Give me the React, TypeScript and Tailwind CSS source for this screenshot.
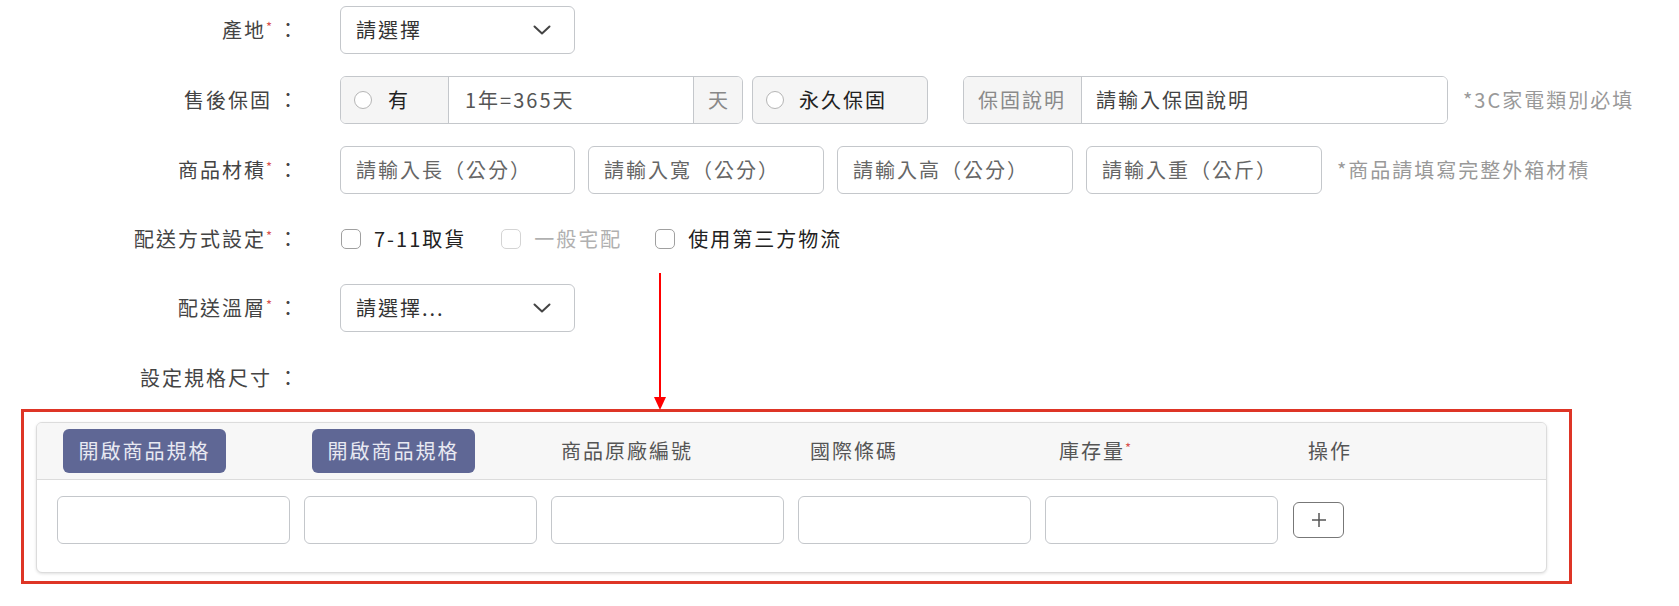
import React from 'react';

const FONT = "font-['Noto_Sans_CJK_TC','Noto_Sans','Liberation_Sans',sans-serif]";

const Label = ({ text, required }: { text: string; required?: boolean }) => (
  <div className="w-[300px] shrink-0 text-right whitespace-nowrap text-[#444]">
    {text}
    {required && <span className="text-[13px] text-[#d9534f] align-top tracking-normal">*</span>}
    <span className="ml-[6px]">：</span>
  </div>
);

const Chevron = () => (
  <svg width="18" height="10" viewBox="0 0 18 10" fill="none">
    <path d="M1.5 1.5 9 8.5l7.5-7" stroke="#444" strokeWidth="2" strokeLinecap="round" strokeLinejoin="round" />
  </svg>
);

const Radio = () => <span className="block w-[18px] h-[18px] rounded-full border-[1.5px] border-[#b5b5b5] bg-white shrink-0" />;

const Checkbox = ({ disabled }: { disabled?: boolean }) => (
  <span
    className={`block w-[20px] h-[20px] rounded-[5px] border-[1.5px] bg-white shrink-0 ${
      disabled ? 'border-[#d4d4d4]' : 'border-[#a0a0a0]'
    }`}
  />
);

const Select = ({ value }: { value: string }) => (
  <div className="w-[235px] h-[48px] border border-[#c4c7cb] rounded-[6px] flex items-center justify-between pl-[15px] pr-[23px] text-[#333] bg-white">
    <span>{value}</span>
    <Chevron />
  </div>
);

const TextBox = ({ placeholder, className = '' }: { placeholder: string; className?: string }) => (
  <div className={`h-[48px] border border-[#c4c7cb] rounded-[6px] flex items-center pl-[15px] text-[#666] bg-white ${className}`}>
    {placeholder}
  </div>
);

const Note = ({ text }: { text: string }) => <span className="text-[#999] whitespace-nowrap">{text}</span>;

const EmptyInput = () => <div className="w-[233px] h-[48px] border border-[#c4c7cb] rounded-[6px] bg-white shrink-0" />;

export default function App() {
  return (
    <div className={`relative w-[1679px] h-[606px] bg-white pt-[6px] text-[20px] tracking-[2px] leading-none ${FONT}`}>
      {/* 產地 */}
      <div className="flex items-center h-[48px]">
        <Label text="產地" required />
        <div className="ml-[40px]">
          <Select value="請選擇" />
        </div>
      </div>

      {/* 售後保固 */}
      <div className="flex items-center h-[48px] mt-[22px]">
        <Label text="售後保固" />
        <div className="ml-[40px] flex items-center">
          <div className="flex h-[48px] border border-[#c4c7cb] rounded-[6px] overflow-hidden">
            <div className="w-[108px] bg-[#f5f5f5] border-r border-[#c4c7cb] flex items-center pl-[13px] gap-[16px] text-[#222]">
              <Radio />
              <span>有</span>
            </div>
            <div className="w-[244px] bg-white flex items-center pl-[16px] text-[#555]">1年=365天</div>
            <div className="w-[49px] bg-[#f5f5f5] border-l border-[#c4c7cb] flex items-center justify-center text-[#888] tracking-normal">
              天
            </div>
          </div>
          <div className="ml-[9px] w-[176px] h-[48px] border border-[#c4c7cb] rounded-[6px] bg-[#f5f5f5] flex items-center pl-[13px] gap-[15px] text-[#222]">
            <Radio />
            <span>永久保固</span>
          </div>
          <div className="ml-[35px] flex h-[48px] w-[485px] border border-[#c4c7cb] rounded-[6px] overflow-hidden">
            <div className="w-[118px] bg-[#f5f5f5] border-r border-[#c4c7cb] flex items-center pl-[14px] text-[#8a8a8a]">
              保固說明
            </div>
            <div className="flex-1 bg-white flex items-center pl-[14px] text-[#444]">請輸入保固說明</div>
          </div>
          <div className="ml-[15px]">
            <Note text="*3C家電類別必填" />
          </div>
        </div>
      </div>

      {/* 商品材積 */}
      <div className="flex items-center h-[48px] mt-[22px]">
        <Label text="商品材積" required />
        <div className="ml-[40px] flex items-center gap-[13px]">
          <TextBox placeholder="請輸入長（公分）" className="w-[235px]" />
          <TextBox placeholder="請輸入寬（公分）" className="w-[236px]" />
          <TextBox placeholder="請輸入高（公分）" className="w-[236px]" />
          <TextBox placeholder="請輸入重（公斤）" className="w-[236px]" />
          <span className="ml-[2px]">
            <Note text="*商品請填寫完整外箱材積" />
          </span>
        </div>
      </div>

      {/* 配送方式設定 */}
      <div className="flex items-center h-[46px] mt-[22px]">
        <Label text="配送方式設定" required />
        <div className="ml-[41px] flex items-center">
          <Checkbox />
          <span className="ml-[13px] text-[#222]">7-11取貨</span>
          <span className="ml-[35px] flex">
            <Checkbox disabled />
          </span>
          <span className="ml-[13px] text-[#b0b0b0]">一般宅配</span>
          <span className="ml-[33px] flex">
            <Checkbox />
          </span>
          <span className="ml-[13px] text-[#222]">使用第三方物流</span>
        </div>
      </div>

      {/* 配送溫層 */}
      <div className="flex items-center h-[48px] mt-[22px]">
        <Label text="配送溫層" required />
        <div className="ml-[40px]">
          <Select value="請選擇..." />
        </div>
      </div>

      {/* 設定規格尺寸 */}
      <div className="flex items-center h-[48px] mt-[22px]">
        <Label text="設定規格尺寸" />
      </div>

      {/* highlighted spec table */}
      <div className="ml-[21px] mt-[7px] w-[1551px] border-[3px] border-[#de3526] pl-[12px] pt-[10px] pb-[8px]">
        <div className="w-[1511px] border border-[#dcdcdc] rounded-[6px] shadow-[0_1px_3px_rgba(0,0,0,0.12)] overflow-hidden bg-white">
          <div className="h-[57px] bg-[#f7f7f7] border-b border-[#dcdcdc] flex items-center pl-[26px] text-[#555]">
            <div className="w-[249px] shrink-0">
              <button className="w-[163px] h-[44px] rounded-[6px] bg-[#5f6795] text-[#e8e9f2] tracking-[2px]">開啟商品規格</button>
            </div>
            <div className="w-[249px] shrink-0">
              <button className="w-[163px] h-[44px] rounded-[6px] bg-[#5f6795] text-[#e8e9f2] tracking-[2px]">開啟商品規格</button>
            </div>
            <div className="w-[249px] shrink-0">商品原廠編號</div>
            <div className="w-[249px] shrink-0">國際條碼</div>
            <div className="w-[249px] shrink-0">
              庫存量<span className="text-[13px] text-[#d9534f] align-top tracking-normal">*</span>
            </div>
            <div className="shrink-0">操作</div>
          </div>
          <div className="flex items-center pl-[20px] pt-[16px] pb-[28px] gap-[14px]">
            <EmptyInput />
            <EmptyInput />
            <EmptyInput />
            <EmptyInput />
            <EmptyInput />
            <button className="ml-[1px] w-[51px] h-[36px] border-[1.5px] border-[#777] rounded-[6px] flex items-center justify-center bg-white">
              <svg width="16" height="16" viewBox="0 0 16 16">
                <path d="M8 1v14M1 8h14" stroke="#555" strokeWidth="1.5" />
              </svg>
            </button>
          </div>
        </div>
      </div>

      {/* annotation arrow */}
      <svg className="absolute left-[653px] top-[272px]" width="14" height="139" viewBox="0 0 14 139">
        <line x1="7" y1="1" x2="7" y2="126" stroke="#ff0000" strokeWidth="2" />
        <path d="M1 125 L13 125 L7 138 Z" fill="#ff0000" />
      </svg>
    </div>
  );
}
